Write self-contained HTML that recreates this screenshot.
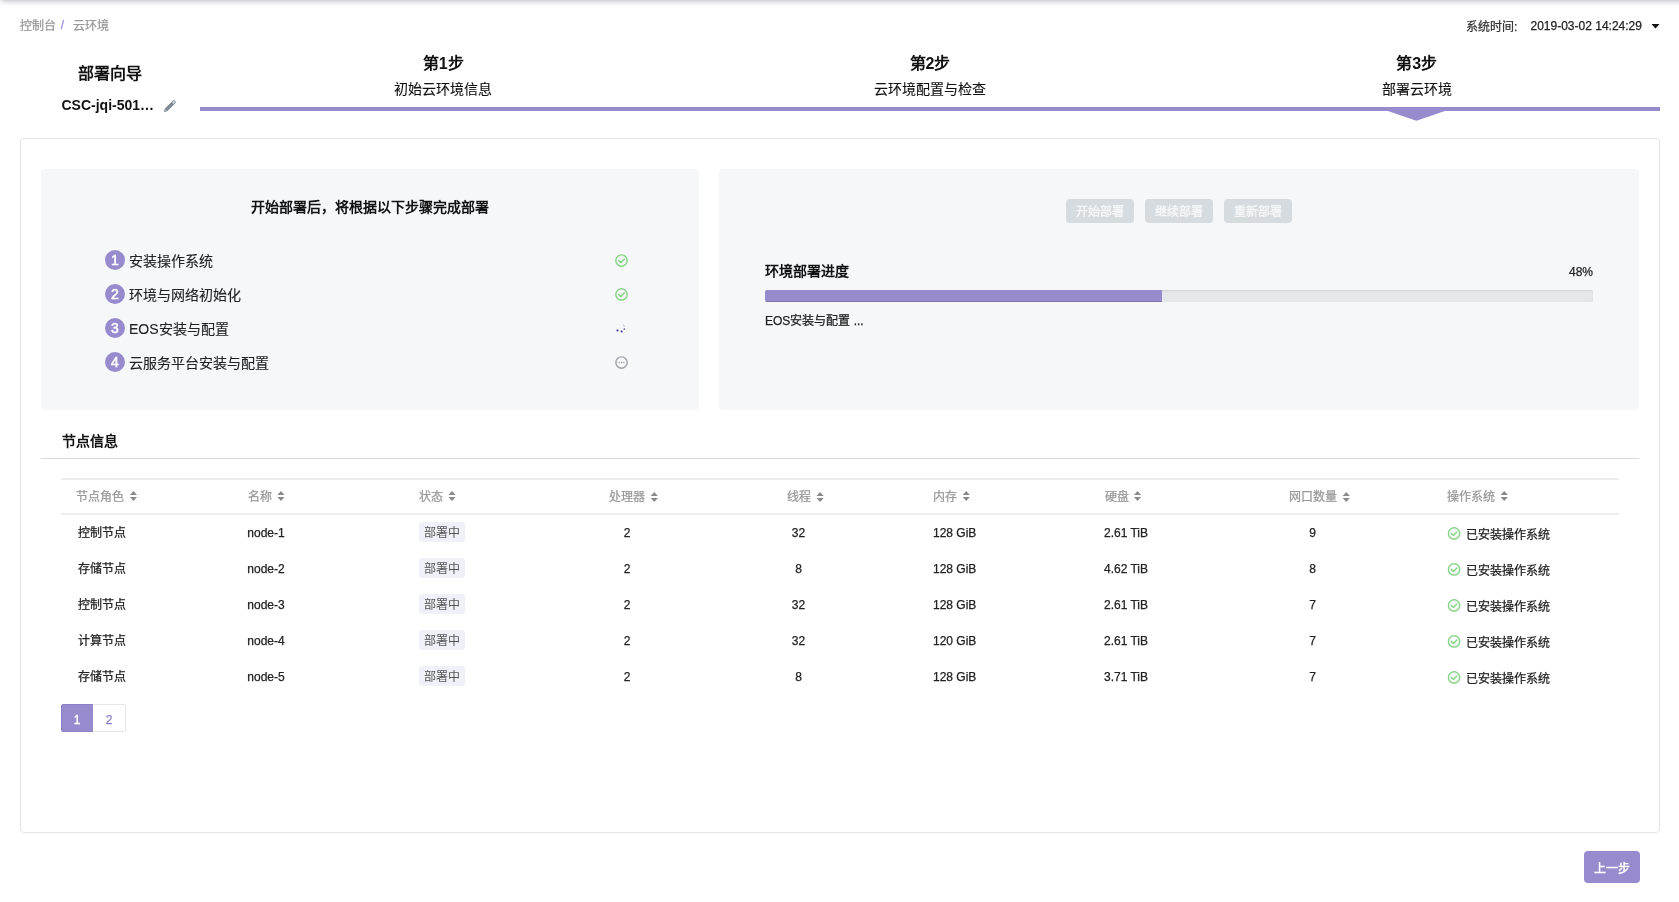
<!DOCTYPE html>
<html lang="zh-CN">
<head>
<meta charset="utf-8">
<title>部署向导</title>
<style>
*{box-sizing:border-box;margin:0;padding:0}
html,body{width:1679px;height:902px;overflow:hidden;background:#fff}
body{position:relative;font-family:"Liberation Sans",sans-serif;font-size:12px;color:#222;-webkit-font-smoothing:antialiased}
#root{position:absolute;left:0;top:0;width:1679px;height:902px;will-change:transform;background:#fff}
.a{position:absolute;display:block}
.t{position:absolute;white-space:nowrap;font-size:12px;-webkit-text-stroke:0.25px}
.f14{font-size:14px;-webkit-text-stroke:0.12px}
.b{font-weight:bold;-webkit-text-stroke:0}
.f16{font-size:16px}
.g{color:#999}
.topshadow{left:1px;top:-12px;width:1700px;height:10px;background:#fff;box-shadow:0 2px 6px rgba(70,64,106,.5)}
.card{left:20px;top:138px;width:1640px;height:695px;border:1px solid #e4e4e4;border-radius:4px;background:#fff}
.panel{background:#f6f7f9;border-radius:4px}
.num{width:20px;height:20px;border-radius:50%;background:#978bce;color:#fff;font-size:14px;line-height:20px;text-align:center;-webkit-text-stroke:0.5px #fff}
.dbtn{width:68px;height:24px;border-radius:4px;background:#d6dbe0;color:#f4f5f7;font-weight:bold;font-size:12px;line-height:26px;text-align:center;overflow:hidden}
.badge{width:46px;height:20px;border-radius:3px;background:#f0f0f8;color:#555;font-size:12px;line-height:22px;text-align:center;overflow:hidden}
</style>
</head>
<body>
<div id="root">

<div class="a topshadow"></div>
<div class="t g" style="left:20px;top:16.3px;line-height:20px;height:20px;">控制台</div>
<div class="t " style="left:60.7px;top:15.3px;line-height:20px;height:20px;color:#9b8ce6">/</div>
<div class="t g" style="left:72.5px;top:16.3px;line-height:20px;height:20px;">云环境</div>
<div class="t " style="left:1466px;top:16.6px;line-height:20px;height:20px;color:#333">系统时间:</div>
<div class="t " style="left:1530.5px;top:15.600000000000001px;line-height:20px;height:20px;color:#222">2019-03-02 14:24:29</div>
<svg class="a" style="left:1651px;top:24px" width="10" height="6" viewBox="0 0 10 6"><path d="M0.5 0 L8.5 0 L4.5 4.4 Z" fill="#111"/></svg>
<div class="t b f16" style="left:-90px;width:400px;text-align:center;top:62.2px;line-height:24px;height:24px;color:#111">部署向导</div>
<div class="t b f14" style="left:61.5px;top:95.3px;line-height:20px;height:20px;color:#111">CSC-jqi-501…</div>
<svg class="a" style="left:160px;top:96px" width="20" height="20" viewBox="0 0 20 20"><g transform="translate(10.1,9.9) rotate(-44.5)"><rect x="-6.2" y="-1.8" width="13.2" height="3.6" rx="1.1" fill="#7f8993"/><path d="M-6.2 -1.8 L-8.6 0 L-6.2 1.8 Z" fill="#7f8993"/><path d="M-6.0 -1.1 L-7.4 0 L-6.0 1.1 Z" fill="#b9c0c7"/><circle cx="5.15" cy="0" r="1.3" fill="#d3d8dd"/></g></svg>
<div class="t b f16" style="left:243.3px;width:400px;text-align:center;top:51.6px;line-height:24px;height:24px;color:#111">第1步</div>
<div class="t f14" style="left:243.3px;width:400px;text-align:center;top:79.0px;line-height:20px;height:20px;color:#111">初始云环境信息</div>
<div class="t b f16" style="left:730px;width:400px;text-align:center;top:51.6px;line-height:24px;height:24px;color:#111">第2步</div>
<div class="t f14" style="left:730px;width:400px;text-align:center;top:79.0px;line-height:20px;height:20px;color:#111">云环境配置与检查</div>
<div class="t b f16" style="left:1216.7px;width:400px;text-align:center;top:51.6px;line-height:24px;height:24px;color:#111">第3步</div>
<div class="t f14" style="left:1216.7px;width:400px;text-align:center;top:79.0px;line-height:20px;height:20px;color:#111">部署云环境</div>
<div class="a" style="left:200px;top:107px;width:1460px;height:4px;background:#978bce"></div>
<svg class="a" style="left:1386px;top:110px" width="61" height="12" viewBox="0 0 61 12"><path d="M0.4 0.5 L60.4 0.5 L30.4 10.8 Z" fill="#978bce"/></svg>
<div class="a card"></div>
<div class="a panel" style="left:41px;top:169px;width:657.5px;height:241px"></div>
<div class="a panel" style="left:718.75px;top:169px;width:920.25px;height:241px"></div>
<div class="t b f14" style="left:170px;width:400px;text-align:center;top:196.7px;line-height:20px;height:20px;color:#111">开始部署后，将根据以下步骤完成部署</div>
<div class="a num" style="left:105px;top:250px">1</div>
<div class="t f14" style="left:129px;top:251.0px;line-height:20px;height:20px;color:#222">安装操作系统</div>
<div class="a num" style="left:105px;top:284px">2</div>
<div class="t f14" style="left:129px;top:285.0px;line-height:20px;height:20px;color:#222">环境与网络初始化</div>
<div class="a num" style="left:105px;top:318px">3</div>
<div class="t f14" style="left:129px;top:319.0px;line-height:20px;height:20px;color:#222">EOS安装与配置</div>
<div class="a num" style="left:105px;top:352px">4</div>
<div class="t f14" style="left:129px;top:353.0px;line-height:20px;height:20px;color:#222">云服务平台安装与配置</div>
<svg class="a" style="left:613px;top:252px" width="17" height="17" viewBox="0 0 17 17"><g transform="translate(0.50,0.50)"><circle cx="8" cy="8" r="5.65" fill="none" stroke="#86d486" stroke-width="1.45"/><path d="M5.15 8.0 L7.3 10.1 L10.75 6.7" fill="none" stroke="#86d486" stroke-width="1.5" stroke-linecap="round" stroke-linejoin="round"/></g></svg>
<svg class="a" style="left:613px;top:286px" width="17" height="17" viewBox="0 0 17 17"><g transform="translate(0.50,0.40)"><circle cx="8" cy="8" r="5.65" fill="none" stroke="#86d486" stroke-width="1.45"/><path d="M5.15 8.0 L7.3 10.1 L10.75 6.7" fill="none" stroke="#86d486" stroke-width="1.5" stroke-linecap="round" stroke-linejoin="round"/></g></svg>
<svg class="a" style="left:613px;top:320px" width="16" height="16" viewBox="0 0 16 16"><circle cx="4.5" cy="10.5" r="1.05" fill="#3a2f8f"/><circle cx="8.6" cy="11.6" r="1.0" fill="#3a2f8f"/><circle cx="11.3" cy="9.0" r="0.85" fill="#5a4fa8"/><path d="M10.3 4.6 L11.4 6.6" stroke="#9a92cf" stroke-width="0.7" fill="none"/></svg>
<svg class="a" style="left:613px;top:354px" width="17" height="17" viewBox="0 0 17 17"><g transform="translate(0.50,0.50)"><circle cx="8" cy="8" r="5.65" fill="none" stroke="#9ea4ab" stroke-width="1.45"/><circle cx="5.7" cy="8" r="0.8" fill="#9ea4ab"/><circle cx="8" cy="8" r="0.8" fill="#9ea4ab"/><circle cx="10.3" cy="8" r="0.8" fill="#9ea4ab"/></g></svg>
<div class="a dbtn" style="left:1065.5px;top:199px">开始部署</div>
<div class="a dbtn" style="left:1145px;top:199px">继续部署</div>
<div class="a dbtn" style="left:1224px;top:199px">重新部署</div>
<div class="t b f14" style="left:765px;top:260.8px;line-height:20px;height:20px;color:#111">环境部署进度</div>
<div class="t " style="left:1193px;width:400px;text-align:right;top:261.6px;line-height:20px;height:20px;color:#222">48%</div>
<div class="a" style="left:765px;top:290px;width:828px;height:12px;border-radius:2px;background:#e5e8eb;box-shadow:inset 0 1px 2px rgba(0,0,0,.1);overflow:hidden"><div style="width:397.4px;height:12px;background:#978bce;box-shadow:inset 0 -1px 0 rgba(0,0,0,.15)"></div></div>
<div class="t " style="left:765px;top:310.6px;line-height:20px;height:20px;color:#222">EOS安装与配置 ...</div>
<div class="t b f14" style="left:62px;top:431.1px;line-height:20px;height:20px;color:#111">节点信息</div>
<div class="a" style="left:41px;top:458px;width:1598px;height:1px;background:#dadada"></div>
<div class="a" style="left:61px;top:478px;width:1558px;height:2px;background:#ededed"></div>
<div class="a" style="left:61px;top:512.5px;width:1558px;height:2px;background:#ededed"></div>
<div class="t g" style="left:76px;top:486.5px;line-height:20px;height:20px;">节点角色</div>
<svg class="a" style="left:128px;top:491px" width="10" height="10" viewBox="0 0 10 10"><g transform="translate(0.95,0)"><path d="M0.9 4.05 L4.5 0 L8.1 4.05 Z M0.9 5.95 L8.1 5.95 L4.5 10 Z" fill="#8a8a8a"/></g></svg>
<div class="t g" style="left:248px;top:486.5px;line-height:20px;height:20px;">名称</div>
<svg class="a" style="left:276px;top:491px" width="10" height="10" viewBox="0 0 10 10"><g transform="translate(0.45,0)"><path d="M0.9 4.05 L4.5 0 L8.1 4.05 Z M0.9 5.95 L8.1 5.95 L4.5 10 Z" fill="#8a8a8a"/></g></svg>
<div class="t g" style="left:419px;top:486.5px;line-height:20px;height:20px;">状态</div>
<svg class="a" style="left:447px;top:491px" width="10" height="10" viewBox="0 0 10 10"><g transform="translate(0.55,0)"><path d="M0.9 4.05 L4.5 0 L8.1 4.05 Z M0.9 5.95 L8.1 5.95 L4.5 10 Z" fill="#8a8a8a"/></g></svg>
<div class="t g" style="left:609.3px;top:486.5px;line-height:20px;height:20px;">处理器</div>
<svg class="a" style="left:649px;top:492px" width="10" height="10" viewBox="0 0 10 10"><g transform="translate(0.75,0)"><path d="M0.9 4.05 L4.5 0 L8.1 4.05 Z M0.9 5.95 L8.1 5.95 L4.5 10 Z" fill="#8a8a8a"/></g></svg>
<div class="t g" style="left:786.6px;top:486.5px;line-height:20px;height:20px;">线程</div>
<svg class="a" style="left:815px;top:492px" width="10" height="10" viewBox="0 0 10 10"><g transform="translate(0.60,0)"><path d="M0.9 4.05 L4.5 0 L8.1 4.05 Z M0.9 5.95 L8.1 5.95 L4.5 10 Z" fill="#8a8a8a"/></g></svg>
<div class="t g" style="left:933px;top:486.5px;line-height:20px;height:20px;">内存</div>
<svg class="a" style="left:961px;top:491px" width="10" height="10" viewBox="0 0 10 10"><g transform="translate(0.75,0)"><path d="M0.9 4.05 L4.5 0 L8.1 4.05 Z M0.9 5.95 L8.1 5.95 L4.5 10 Z" fill="#8a8a8a"/></g></svg>
<div class="t g" style="left:1104.5px;top:486.5px;line-height:20px;height:20px;">硬盘</div>
<svg class="a" style="left:1133px;top:491px" width="10" height="10" viewBox="0 0 10 10"><g transform="translate(0.05,0)"><path d="M0.9 4.05 L4.5 0 L8.1 4.05 Z M0.9 5.95 L8.1 5.95 L4.5 10 Z" fill="#8a8a8a"/></g></svg>
<div class="t g" style="left:1289.2px;top:486.5px;line-height:20px;height:20px;">网口数量</div>
<svg class="a" style="left:1341px;top:492px" width="10" height="10" viewBox="0 0 10 10"><g transform="translate(0.75,0)"><path d="M0.9 4.05 L4.5 0 L8.1 4.05 Z M0.9 5.95 L8.1 5.95 L4.5 10 Z" fill="#8a8a8a"/></g></svg>
<div class="t g" style="left:1447.3px;top:486.5px;line-height:20px;height:20px;">操作系统</div>
<svg class="a" style="left:1499px;top:491px" width="10" height="10" viewBox="0 0 10 10"><g transform="translate(0.75,0)"><path d="M0.9 4.05 L4.5 0 L8.1 4.05 Z M0.9 5.95 L8.1 5.95 L4.5 10 Z" fill="#8a8a8a"/></g></svg>
<div class="t " style="left:78px;top:523.4px;line-height:20px;height:20px;">控制节点</div>
<div class="t " style="left:247.3px;top:522.6px;line-height:20px;height:20px;">node-1</div>
<div class="a badge" style="left:419px;top:522.0px">部署中</div>
<div class="t " style="left:427px;width:400px;text-align:center;top:522.5px;line-height:20px;height:20px;">2</div>
<div class="t " style="left:598.5px;width:400px;text-align:center;top:522.5px;line-height:20px;height:20px;">32</div>
<div class="t " style="left:933px;top:522.5px;line-height:20px;height:20px;">128 GiB</div>
<div class="t " style="left:1104px;top:522.5px;line-height:20px;height:20px;">2.61 TiB</div>
<div class="t " style="left:1112.5px;width:400px;text-align:center;top:522.5px;line-height:20px;height:20px;">9</div>
<svg class="a" style="left:1446px;top:525px" width="17" height="17" viewBox="0 0 17 17"><g transform="translate(0.05,0.40)"><circle cx="8" cy="8" r="5.65" fill="none" stroke="#86d486" stroke-width="1.45"/><path d="M5.15 8.0 L7.3 10.1 L10.75 6.7" fill="none" stroke="#86d486" stroke-width="1.5" stroke-linecap="round" stroke-linejoin="round"/></g></svg>
<div class="t " style="left:1466.4px;top:524.5px;line-height:20px;height:20px;">已安装操作系统</div>
<div class="t " style="left:78px;top:559.4px;line-height:20px;height:20px;">存储节点</div>
<div class="t " style="left:247.3px;top:558.6px;line-height:20px;height:20px;">node-2</div>
<div class="a badge" style="left:419px;top:558.0px">部署中</div>
<div class="t " style="left:427px;width:400px;text-align:center;top:558.5px;line-height:20px;height:20px;">2</div>
<div class="t " style="left:598.5px;width:400px;text-align:center;top:558.5px;line-height:20px;height:20px;">8</div>
<div class="t " style="left:933px;top:558.5px;line-height:20px;height:20px;">128 GiB</div>
<div class="t " style="left:1104px;top:558.5px;line-height:20px;height:20px;">4.62 TiB</div>
<div class="t " style="left:1112.5px;width:400px;text-align:center;top:558.5px;line-height:20px;height:20px;">8</div>
<svg class="a" style="left:1446px;top:561px" width="17" height="17" viewBox="0 0 17 17"><g transform="translate(0.05,0.40)"><circle cx="8" cy="8" r="5.65" fill="none" stroke="#86d486" stroke-width="1.45"/><path d="M5.15 8.0 L7.3 10.1 L10.75 6.7" fill="none" stroke="#86d486" stroke-width="1.5" stroke-linecap="round" stroke-linejoin="round"/></g></svg>
<div class="t " style="left:1466.4px;top:560.5px;line-height:20px;height:20px;">已安装操作系统</div>
<div class="t " style="left:78px;top:595.4px;line-height:20px;height:20px;">控制节点</div>
<div class="t " style="left:247.3px;top:594.6px;line-height:20px;height:20px;">node-3</div>
<div class="a badge" style="left:419px;top:594.0px">部署中</div>
<div class="t " style="left:427px;width:400px;text-align:center;top:594.5px;line-height:20px;height:20px;">2</div>
<div class="t " style="left:598.5px;width:400px;text-align:center;top:594.5px;line-height:20px;height:20px;">32</div>
<div class="t " style="left:933px;top:594.5px;line-height:20px;height:20px;">128 GiB</div>
<div class="t " style="left:1104px;top:594.5px;line-height:20px;height:20px;">2.61 TiB</div>
<div class="t " style="left:1112.5px;width:400px;text-align:center;top:594.5px;line-height:20px;height:20px;">7</div>
<svg class="a" style="left:1446px;top:597px" width="17" height="17" viewBox="0 0 17 17"><g transform="translate(0.05,0.40)"><circle cx="8" cy="8" r="5.65" fill="none" stroke="#86d486" stroke-width="1.45"/><path d="M5.15 8.0 L7.3 10.1 L10.75 6.7" fill="none" stroke="#86d486" stroke-width="1.5" stroke-linecap="round" stroke-linejoin="round"/></g></svg>
<div class="t " style="left:1466.4px;top:596.5px;line-height:20px;height:20px;">已安装操作系统</div>
<div class="t " style="left:78px;top:631.4px;line-height:20px;height:20px;">计算节点</div>
<div class="t " style="left:247.3px;top:630.6px;line-height:20px;height:20px;">node-4</div>
<div class="a badge" style="left:419px;top:630.0px">部署中</div>
<div class="t " style="left:427px;width:400px;text-align:center;top:630.5px;line-height:20px;height:20px;">2</div>
<div class="t " style="left:598.5px;width:400px;text-align:center;top:630.5px;line-height:20px;height:20px;">32</div>
<div class="t " style="left:933px;top:630.5px;line-height:20px;height:20px;">120 GiB</div>
<div class="t " style="left:1104px;top:630.5px;line-height:20px;height:20px;">2.61 TiB</div>
<div class="t " style="left:1112.5px;width:400px;text-align:center;top:630.5px;line-height:20px;height:20px;">7</div>
<svg class="a" style="left:1446px;top:633px" width="17" height="17" viewBox="0 0 17 17"><g transform="translate(0.05,0.40)"><circle cx="8" cy="8" r="5.65" fill="none" stroke="#86d486" stroke-width="1.45"/><path d="M5.15 8.0 L7.3 10.1 L10.75 6.7" fill="none" stroke="#86d486" stroke-width="1.5" stroke-linecap="round" stroke-linejoin="round"/></g></svg>
<div class="t " style="left:1466.4px;top:632.5px;line-height:20px;height:20px;">已安装操作系统</div>
<div class="t " style="left:78px;top:667.4px;line-height:20px;height:20px;">存储节点</div>
<div class="t " style="left:247.3px;top:666.6px;line-height:20px;height:20px;">node-5</div>
<div class="a badge" style="left:419px;top:666.0px">部署中</div>
<div class="t " style="left:427px;width:400px;text-align:center;top:666.5px;line-height:20px;height:20px;">2</div>
<div class="t " style="left:598.5px;width:400px;text-align:center;top:666.5px;line-height:20px;height:20px;">8</div>
<div class="t " style="left:933px;top:666.5px;line-height:20px;height:20px;">128 GiB</div>
<div class="t " style="left:1104px;top:666.5px;line-height:20px;height:20px;">3.71 TiB</div>
<div class="t " style="left:1112.5px;width:400px;text-align:center;top:666.5px;line-height:20px;height:20px;">7</div>
<svg class="a" style="left:1446px;top:669px" width="17" height="17" viewBox="0 0 17 17"><g transform="translate(0.05,0.40)"><circle cx="8" cy="8" r="5.65" fill="none" stroke="#86d486" stroke-width="1.45"/><path d="M5.15 8.0 L7.3 10.1 L10.75 6.7" fill="none" stroke="#86d486" stroke-width="1.5" stroke-linecap="round" stroke-linejoin="round"/></g></svg>
<div class="t " style="left:1466.4px;top:668.5px;line-height:20px;height:20px;">已安装操作系统</div>
<div class="a" style="left:61px;top:704px;width:32.5px;height:28px;background:#978bce;border:1px solid #8c80c8;border-radius:2px 0 0 2px"></div>
<div class="a" style="left:93px;top:704px;width:32.5px;height:28px;background:#fff;border:1px solid #e6e6e6;border-left:none;border-radius:0 2px 2px 0"></div>
<div class="t " style="left:-123px;width:400px;text-align:center;top:709.7px;line-height:20px;height:20px;color:#fff;-webkit-text-stroke:0.35px #fff">1</div>
<div class="t " style="left:-91px;width:400px;text-align:center;top:709.7px;line-height:20px;height:20px;color:#8a7dc8">2</div>
<div class="a" style="left:1584px;top:851px;width:56px;height:32px;border-radius:4px;background:#978bce"></div>
<div class="t b" style="left:1412px;width:400px;text-align:center;top:858.5px;line-height:20px;height:20px;color:#fff">上一步</div>
</div>
</body>
</html>
